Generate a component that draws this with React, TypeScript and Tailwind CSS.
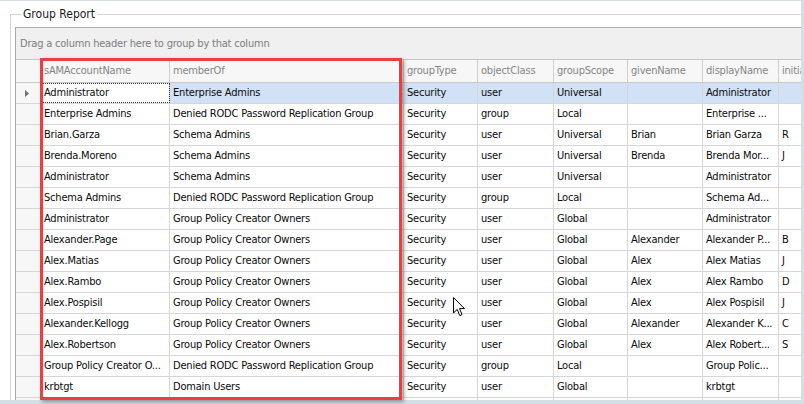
import React from "react";

type Row = string[];

const GP = "Group Policy Creator Owners";
const DR = "Denied RODC Password Replication Group";

const rows: Row[] = [
  ["Administrator", "Enterprise Admins", "Security", "user", "Universal", "", "Administrator", ""],
  ["Enterprise Admins", DR, "Security", "group", "Local", "", "Enterprise ...", ""],
  ["Brian.Garza", "Schema Admins", "Security", "user", "Universal", "Brian", "Brian Garza", "R"],
  ["Brenda.Moreno", "Schema Admins", "Security", "user", "Universal", "Brenda", "Brenda Mor...", "J"],
  ["Administrator", "Schema Admins", "Security", "user", "Universal", "", "Administrator", ""],
  ["Schema Admins", DR, "Security", "group", "Local", "", "Schema Ad...", ""],
  ["Administrator", GP, "Security", "user", "Global", "", "Administrator", ""],
  ["Alexander.Page", GP, "Security", "user", "Global", "Alexander", "Alexander P...", "B"],
  ["Alex.Matias", GP, "Security", "user", "Global", "Alex", "Alex Matias", "J"],
  ["Alex.Rambo", GP, "Security", "user", "Global", "Alex", "Alex Rambo", "D"],
  ["Alex.Pospisil", GP, "Security", "user", "Global", "Alex", "Alex Pospisil", "J"],
  ["Alexander.Kellogg", GP, "Security", "user", "Global", "Alexander", "Alexander K...", "C"],
  ["Alex.Robertson", GP, "Security", "user", "Global", "Alex", "Alex Robert...", "S"],
  ["Group Policy Creator O...", DR, "Security", "group", "Local", "", "Group Polic...", ""],
  ["krbtgt", "Domain Users", "Security", "user", "Global", "", "krbtgt", ""],
  ["", "", "", "", "", "", "", ""],
];

const headers = [
  "sAMAccountName",
  "memberOf",
  "groupType",
  "objectClass",
  "groupScope",
  "givenName",
  "displayName",
  "initials",
];

const widths = ["w-[129px]", "w-[234px]", "w-[74px]", "w-[76px]", "w-[74px]", "w-[75px]", "w-[76px]", "w-[60px]"];

export default function App() {
  return (
    <div
      className="relative w-[804px] h-[404px] overflow-hidden bg-[#d3dfe5] pt-[1px] pr-[3px] pb-[4px]"
      style={{ fontFamily: "Tahoma, 'DejaVu Sans Condensed', 'Liberation Sans', sans-serif" }}
    >
      <div className="h-full bg-white overflow-hidden pt-[6px]">
        <fieldset className="ml-[10px] border-l border-t border-[#d5d5d5] h-[600px] pl-[4px]">
          <legend className="ml-[6px] px-[2px] text-[12px] leading-[14px] text-[#1a1a1a]">Group Report</legend>
          <div className="mt-[6px] w-[900px] border-l border-t border-[#a9a9a9] tracking-[-0.2px]">
            <div className="h-[32px] bg-[#f0f0f0] border-b border-[#c4c4c4] flex items-center pl-[4px] pt-[1px] text-[11px] text-[#7d7d7d]">
              Drag a column header here to group by that column
            </div>
            <div className="flex h-[23px] bg-[#f7f7f7] border-b border-[#c8c8c8] text-[11px] text-[#858585]">
              <div className="w-[25px] shrink-0 border-r border-[#cfcfcf]" />
              {headers.map((h, i) => (
                <div
                  key={i}
                  className={`${widths[i]} shrink-0 border-r border-[#cfcfcf] flex items-center pl-[3px] pt-[1px] whitespace-nowrap overflow-hidden`}
                >
                  {h}
                </div>
              ))}
            </div>
            {rows.map((r, ri) => (
              <div
                key={ri}
                className={`flex h-[21px] border-b border-[#d6d6d6] text-[11px] text-[#0a0a0a] ${ri === 0 ? "bg-[#d2e1f5]" : "bg-white"}`}
              >
                <div className="w-[25px] shrink-0 border-r border-[#cfcfcf] bg-[#f7f7f7] flex items-center pl-[9px]">
                  {ri === 0 && (
                    <svg width="4" height="7" viewBox="0 0 4 7">
                      <path d="M0 0 L4 3.5 L0 7 Z" fill="#707070" />
                    </svg>
                  )}
                </div>
                {r.map((c, ci) => (
                  <div
                    key={ci}
                    className={`${widths[ci]} shrink-0 border-r border-[#d6d6d6] flex items-center pl-[3px] pt-[1px] whitespace-nowrap overflow-hidden ${
                      ri === 0 && ci === 0 ? "bg-white outline-1 outline-dotted outline-[#333] -outline-offset-1" : ""
                    }`}
                  >
                    {c}
                  </div>
                ))}
              </div>
            ))}
          </div>
        </fieldset>
      </div>

      <div className="absolute left-[40px] top-[58px] w-[362px] h-[342px] border-[3px] border-[#e8403f] shadow-[2px_2px_4px_rgba(0,0,0,0.35)]" />

      <svg className="absolute left-[453px] top-[297px]" width="14" height="21" viewBox="0 0 14 21">
        <path d="M0.5 0.5 L0.5 16 L4.2 12.4 L6.8 18.6 L9 17.6 L6.5 11.6 L11.5 11.6 Z" fill="#fff" stroke="#000" strokeWidth="1" strokeLinejoin="round" />
      </svg>
    </div>
  );
}
